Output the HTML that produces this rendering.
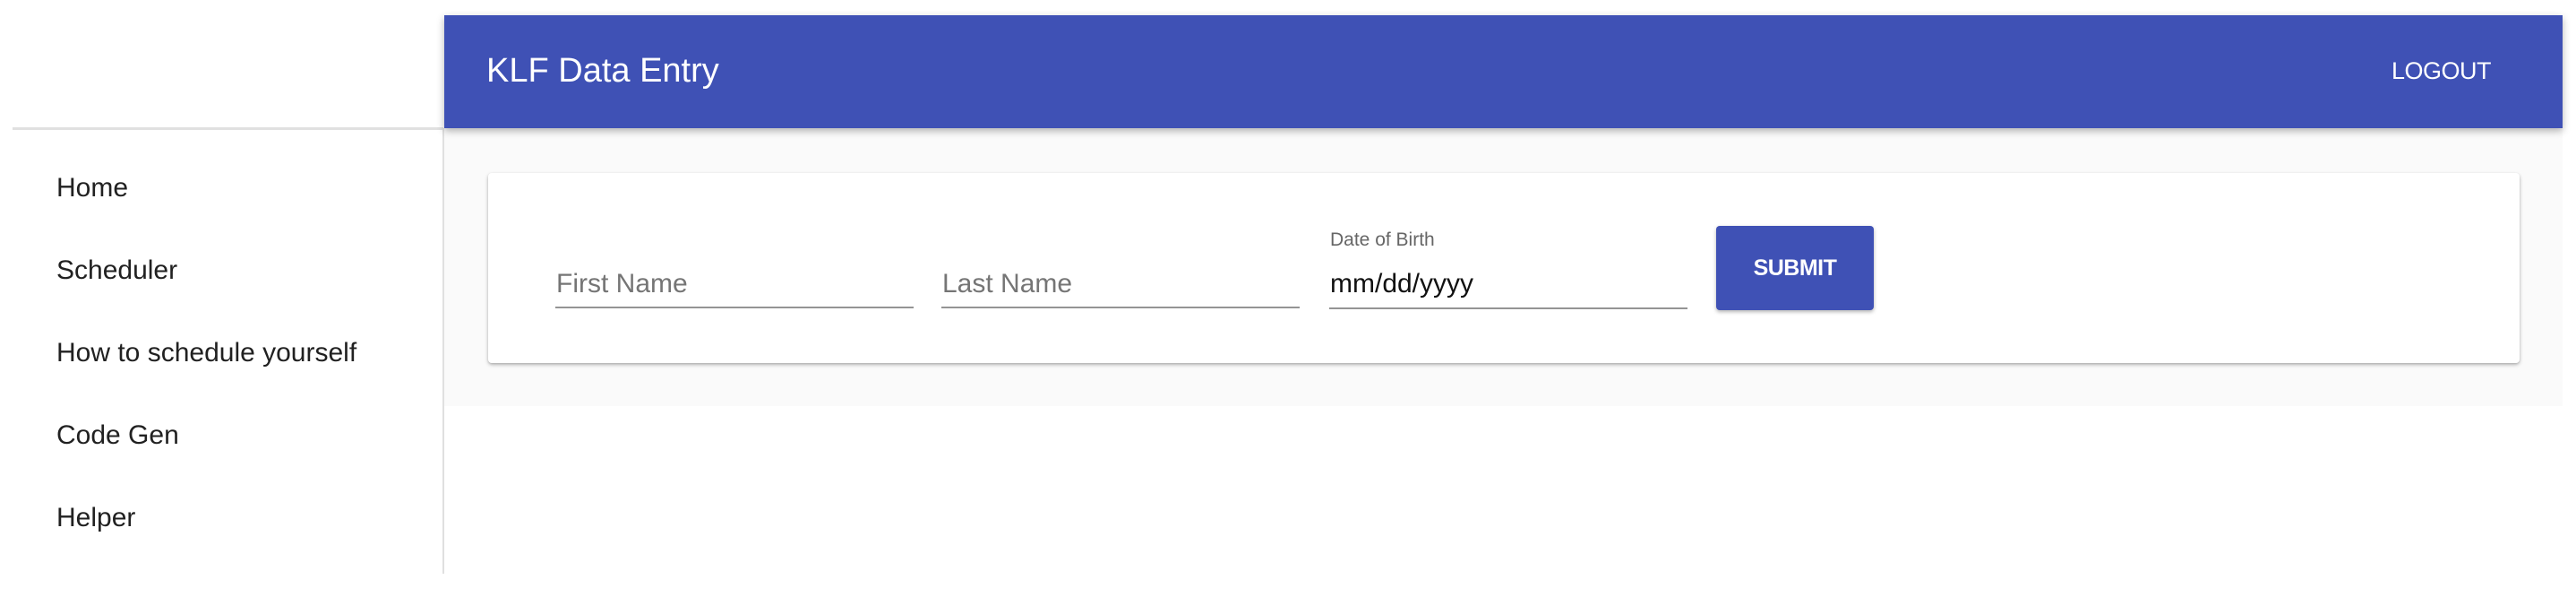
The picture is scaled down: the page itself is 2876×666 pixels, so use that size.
<!DOCTYPE html>
<html><head><meta charset="utf-8"><style>
*{margin:0;padding:0;box-sizing:border-box}
body{width:2876px;height:666px;background:#fff;font-family:"Liberation Sans",Arial,sans-serif;position:relative;overflow:hidden}
.a{position:absolute;white-space:nowrap}
.nav{left:63px;font-size:30px;color:#212121;line-height:1}
.ul{position:absolute;height:2px;background:#949494;width:400px;top:342px}
</style></head><body>
<div class="a" style="left:14px;top:142px;width:481px;height:3px;background:#e0e0e0"></div>
<div class="a" style="left:494px;top:143px;width:2px;height:497px;background:#e0e0e0"></div>
<div class="a" style="left:496px;top:143px;width:2365px;height:310px;background:#fafafa"></div>
<div class="a" style="left:496px;top:17px;width:2365px;height:126px;background:#3f51b5;box-shadow:0 3px 8px rgba(0,0,0,.3)"></div>
<div class="a" style="left:543px;top:57px;font-size:38px;color:#fff;line-height:44px">KLF Data Entry</div>
<div class="a" style="left:2670px;top:64px;font-size:27px;color:#fff;line-height:30px;font-weight:500;letter-spacing:-0.5px">LOGOUT</div>

<div class="a nav" style="top:195px">Home</div>
<div class="a nav" style="top:287px">Scheduler</div>
<div class="a nav" style="top:379px">How to schedule yourself</div>
<div class="a nav" style="top:471px">Code Gen</div>
<div class="a nav" style="top:563px">Helper</div>

<div class="a" style="left:545px;top:193px;width:2268px;height:212px;background:#fff;border-radius:4px;box-shadow:0 2px 4px rgba(0,0,0,.25),0 1px 2px rgba(0,0,0,.12)"></div>
<div class="a" style="left:621px;top:300px;font-size:30px;color:#757575;line-height:34px">First Name</div>
<div class="ul" style="left:620px"></div>
<div class="a" style="left:1052px;top:300px;font-size:30px;color:#757575;line-height:34px">Last Name</div>
<div class="ul" style="left:1051px"></div>
<div class="a" style="left:1485px;top:256px;font-size:21px;color:#666;line-height:24px">Date of Birth</div>
<div class="a" style="left:1485px;top:300px;font-size:30px;color:#111;line-height:34px">mm/dd/yyyy</div>
<div class="ul" style="left:1484px;top:343px"></div>
<div class="a" style="left:1916px;top:252px;width:176px;height:94px;background:#3f51b5;border-radius:4px;box-shadow:0 2px 4px rgba(0,0,0,.3);color:#fff;font-size:25px;font-weight:bold;line-height:94px;text-align:center;letter-spacing:-0.5px">SUBMIT</div>
</body></html>
